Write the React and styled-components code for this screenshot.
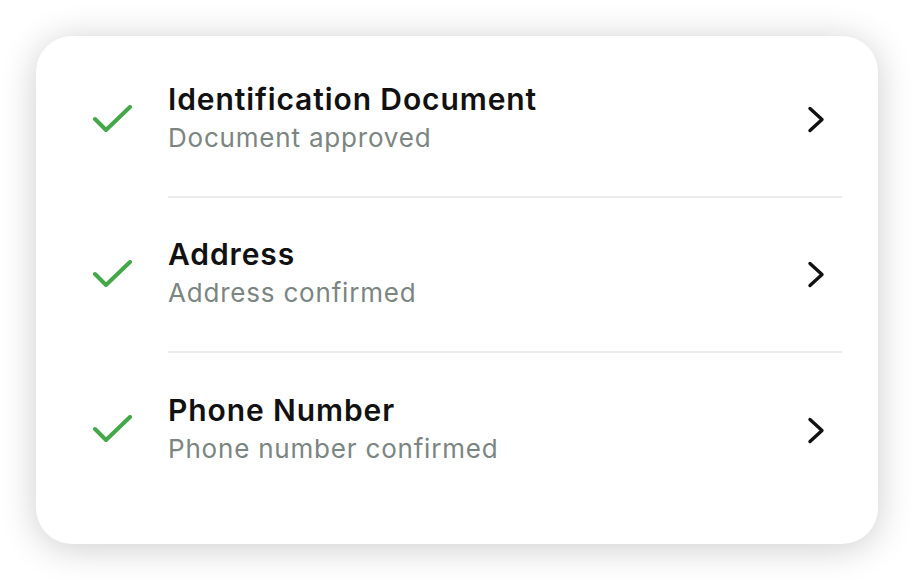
import React from "react";
import styled, { createGlobalStyle } from "styled-components";

const Global = createGlobalStyle`
  html, body { margin: 0; padding: 0; background: #ffffff; }
  body { font-family: Inter, "Noto Sans", sans-serif; }
`;

const Page = styled.div`
  padding: 36px;
  width: 914px;
  height: 580px;
  box-sizing: border-box;
`;

const Card = styled.div`
  width: 842px;
  height: 508px;
  box-sizing: border-box;
  background: #ffffff;
  border-radius: 36px;
  box-shadow: 0 4px 36px rgba(0, 0, 0, 0.2);
  padding: 7px 0 0 56px;
  display: flex;
  flex-direction: column;
`;

const Row = styled.div`
  display: flex;
  align-items: stretch;
  height: 155px;
`;

const IconCell = styled.div`
  width: 76px;
  display: flex;
  align-items: center;
  padding-bottom: 2px;
`;

const Body = styled.div`
  flex: 1;
  display: flex;
  align-items: center;
  margin-right: 36px;
  border-bottom: ${(p) => (p.$last ? "none" : "2px solid #ebebeb")};
  box-sizing: border-box;
`;

const Texts = styled.div`
  flex: 1;
  display: flex;
  flex-direction: column;
  padding-bottom: 4px;
`;

const Title = styled.div`
  font-size: 30px;
  font-weight: 600;
  color: #111111;
  line-height: 36px;
  letter-spacing: 0.9px;
  margin-bottom: 4px;
`;

const Subtitle = styled.div`
  font-size: 26px;
  font-weight: 400;
  color: #7b8581;
  line-height: 34px;
  letter-spacing: 0.8px;
`;

const Chevron = styled.div`
  width: 20px;
  margin-right: 16px;
  display: flex;
  align-items: center;
`;

const Check = () => (
  <svg width="42" height="30" viewBox="0 0 42 30" fill="none">
    <path d="M3 14 L14 25 L38 2" stroke="#43a847" strokeWidth="4" strokeLinecap="round" strokeLinejoin="round" />
  </svg>
);

const Arrow = () => (
  <svg width="20" height="28" viewBox="0 0 20 28" fill="none">
    <path d="M4 2.5 L16 13.5 L4 24.5" stroke="#111111" strokeWidth="3.4" strokeLinecap="round" strokeLinejoin="round" />
  </svg>
);

const items = [
  { title: "Identification Document", sub: "Document approved" },
  { title: "Address", sub: "Address confirmed" },
  { title: "Phone Number", sub: "Phone number confirmed" },
];

export default function App() {
  return (
    <Page>
      <Global />
      <Card>
        {items.map((it, i) => (
          <Row key={it.title}>
            <IconCell>
              <Check />
            </IconCell>
            <Body $last={i === items.length - 1}>
              <Texts>
                <Title>{it.title}</Title>
                <Subtitle>{it.sub}</Subtitle>
              </Texts>
              <Chevron>
                <Arrow />
              </Chevron>
            </Body>
          </Row>
        ))}
      </Card>
    </Page>
  );
}
